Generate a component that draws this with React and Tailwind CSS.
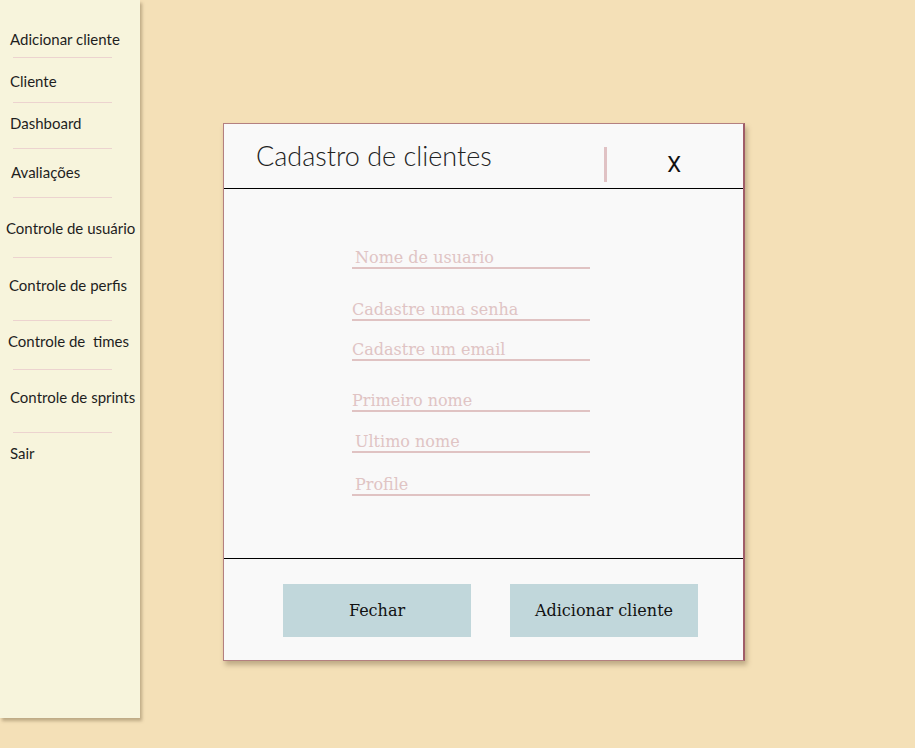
import React from "react";

// sidebar entries: text offset, then separator below it
const menu = [
  { label: "Adicionar cliente", top: "mt-[29px]", x: "pl-[10px]", sep: "mt-[8px]" },
  { label: "Cliente", top: "mt-[13px]", x: "pl-[10px]", sep: "mt-[11px]" },
  { label: "Dashboard", top: "mt-[10px]", x: "pl-[10px]", sep: "mt-[15px]" },
  { label: "Avaliações", top: "mt-[13px]", x: "pl-[11px]", sep: "mt-[15px]" },
  { label: "Controle de usuário", top: "mt-[20px]", x: "pl-[6px]", sep: "mt-[19px]" },
  { label: "Controle de perfis", top: "mt-[17px]", x: "pl-[9px]", sep: "mt-[25px]" },
  { label: "Controle de\u00a0 times", top: "mt-[10px]", x: "pl-[8px]", sep: "mt-[18px]" },
  { label: "Controle de sprints", top: "mt-[17px]", x: "pl-[10px]", sep: "mt-[25px]" },
  { label: "Sair", top: "mt-[10px]", x: "pl-[10px]", sep: null },
];

const fields = [
  { ph: "Nome de usuario", mt: "mt-[56px]", pl: "pl-[3px]" },
  { ph: "Cadastre uma senha", mt: "mt-[28px]", pl: "pl-0" },
  { ph: "Cadastre um email", mt: "mt-[16px]", pl: "pl-0" },
  { ph: "Primeiro nome", mt: "mt-[27px]", pl: "pl-0" },
  { ph: "Ultimo nome", mt: "mt-[17px]", pl: "pl-[3px]" },
  { ph: "Profile", mt: "mt-[19px]", pl: "pl-[3px]" },
];

function Sidebar() {
  return (
    <aside className="w-[140px] h-[718px] bg-[#f7f4dc] shadow-[2px_3px_3px_rgba(90,70,40,0.35)] flex flex-col font-['Lato',sans-serif] text-[15px] text-[#1e1e1e]">
      {menu.map((m) => (
        <div key={m.label} className="flex flex-col">
          <span className={`${m.top} ${m.x} h-5 leading-5 whitespace-pre`}>{m.label}</span>
          {m.sep && <div className={`${m.sep} ml-[13px] w-[99px] h-px bg-[#ecd3cf]`} />}
        </div>
      ))}
    </aside>
  );
}

function ClientModal() {
  return (
    <div className="absolute left-[223px] top-[123px] w-[522px] h-[538px] bg-[#f9f9f9] border border-[#b48080] border-r-2 border-r-[#a05d68] shadow-[2px_4px_5px_rgba(90,70,40,0.35)] flex flex-col">
      <div className="h-[65px] shrink-0 border-b border-black flex items-center pl-[32px]">
        <h1 className="font-['Lato',sans-serif] font-light text-[27px] text-[#222] leading-none -mt-[2px]">Cadastro de clientes</h1>
        <div className="ml-auto w-[3px] h-[35px] bg-[#e0c2c4] mr-[60px] mt-[16px]" />
        <button className="mr-[62px] mt-[18px] font-['Roboto',sans-serif] text-[22px] leading-none text-[#111]">X</button>
      </div>
      <div className="flex-1 flex flex-col pl-[128px]">
        {fields.map((f) => (
          <input
            key={f.ph}
            placeholder={f.ph}
            className={`${f.mt} ${f.pl} w-[238px] h-[24px] pt-[3px] bg-transparent border-b-2 border-[#e0c3c3] outline-none font-['DejaVu_Serif',serif] text-[16px] leading-[19px] placeholder:text-[#e0c4c4]`}
          />
        ))}
      </div>
      <div className="h-[102px] shrink-0 border-t border-black flex items-center pl-[59px] gap-[39px] pt-[2px]">
        <button className="w-[188px] h-[53px] bg-[#c1d7db] font-['DejaVu_Serif',serif] text-[16px] text-[#111]">Fechar</button>
        <button className="w-[188px] h-[53px] bg-[#c1d7db] font-['DejaVu_Serif',serif] text-[16px] text-[#111]">Adicionar cliente</button>
      </div>
    </div>
  );
}

export default function App() {
  return (
    <div className="relative w-[915px] h-[748px] bg-[#f4e0b7] overflow-hidden">
      <Sidebar />
      <ClientModal />
    </div>
  );
}
